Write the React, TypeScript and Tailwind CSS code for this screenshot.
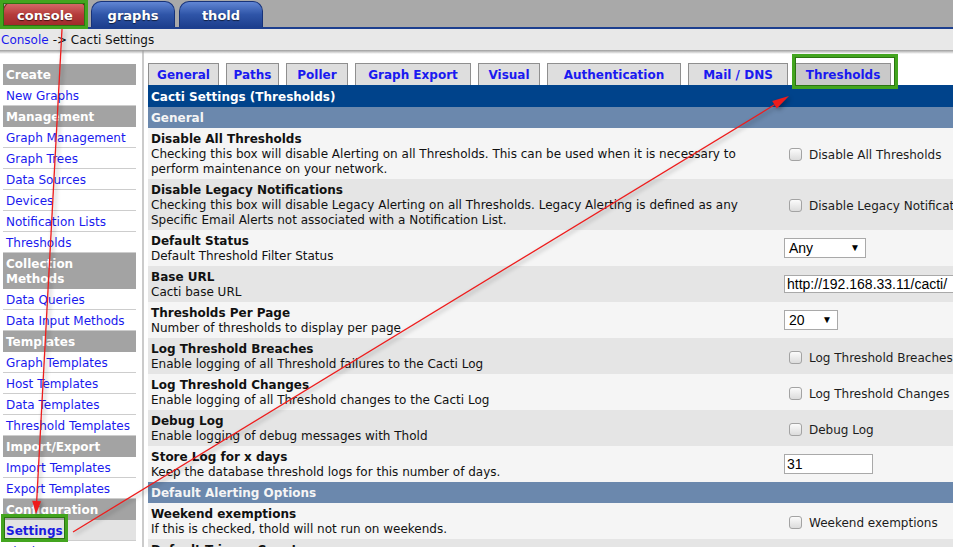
import React from 'react';

type Ctl =
  | { type: 'check'; label: string }
  | { type: 'select'; value: string; width: string }
  | { type: 'input'; value: string; width: string; height: string };

interface Row {
  title: string;
  desc: string;
  ctl: Ctl;
}

interface Section {
  name: string;
  rows: Row[];
}

type MenuEntry = { header: string; tall?: boolean } | { item: string; active?: boolean };

const menu: MenuEntry[] = [
  { header: 'Create' },
  { item: 'New Graphs' },
  { header: 'Management' },
  { item: 'Graph Management' },
  { item: 'Graph Trees' },
  { item: 'Data Sources' },
  { item: 'Devices' },
  { item: 'Notification Lists' },
  { item: 'Thresholds' },
  { header: 'Collection Methods', tall: true },
  { item: 'Data Queries' },
  { item: 'Data Input Methods' },
  { header: 'Templates' },
  { item: 'Graph Templates' },
  { item: 'Host Templates' },
  { item: 'Data Templates' },
  { item: 'Threshold Templates' },
  { header: 'Import/Export' },
  { item: 'Import Templates' },
  { item: 'Export Templates' },
  { header: 'Configuration' },
  { item: 'Settings', active: true },
  { item: 'Plugin Management' },
];

const tabs = [
  { name: 'General', w: 'w-[71px]' },
  { name: 'Paths', w: 'w-[53px]' },
  { name: 'Poller', w: 'w-[62px]' },
  { name: 'Graph Export', w: 'w-[116px]' },
  { name: 'Visual', w: 'w-[62px]' },
  { name: 'Authentication', w: 'w-[134px]' },
  { name: 'Mail / DNS', w: 'w-[100px]' },
  { name: 'Thresholds', w: 'w-[96px]', active: true },
];

const sections: Section[] = [
  {
    name: 'General',
    rows: [
      {
        title: 'Disable All Thresholds',
        desc: 'Checking this box will disable Alerting on all Thresholds. This can be used when it is necessary to perform maintenance on your network.',
        ctl: { type: 'check', label: 'Disable All Thresholds' },
      },
      {
        title: 'Disable Legacy Notifications',
        desc: 'Checking this box will disable Legacy Alerting on all Thresholds. Legacy Alerting is defined as any Specific Email Alerts not associated with a Notification List.',
        ctl: { type: 'check', label: 'Disable Legacy Notifications' },
      },
      {
        title: 'Default Status',
        desc: 'Default Threshold Filter Status',
        ctl: { type: 'select', value: 'Any', width: 'w-[82px]' },
      },
      {
        title: 'Base URL',
        desc: 'Cacti base URL',
        ctl: { type: 'input', value: 'http://192.168.33.11/cacti/', width: 'w-[230px]', height: 'h-[18px]' },
      },
      {
        title: 'Thresholds Per Page',
        desc: 'Number of thresholds to display per page',
        ctl: { type: 'select', value: '20', width: 'w-[54px]' },
      },
      {
        title: 'Log Threshold Breaches',
        desc: 'Enable logging of all Threshold failures to the Cacti Log',
        ctl: { type: 'check', label: 'Log Threshold Breaches' },
      },
      {
        title: 'Log Threshold Changes',
        desc: 'Enable logging of all Threshold changes to the Cacti Log',
        ctl: { type: 'check', label: 'Log Threshold Changes' },
      },
      {
        title: 'Debug Log',
        desc: 'Enable logging of debug messages with Thold',
        ctl: { type: 'check', label: 'Debug Log' },
      },
      {
        title: 'Store Log for x days',
        desc: 'Keep the database threshold logs for this number of days.',
        ctl: { type: 'input', value: '31', width: 'w-[89px]', height: 'h-[20px]' },
      },
    ],
  },
  {
    name: 'Default Alerting Options',
    rows: [
      {
        title: 'Weekend exemptions',
        desc: 'If this is checked, thold will not run on weekends.',
        ctl: { type: 'check', label: 'Weekend exemptions' },
      },
      {
        title: 'Default Trigger Count',
        desc: 'Default number of consecutive times the Data Source must be in breach of the threshold for an alert to be raised.',
        ctl: { type: 'input', value: '1', width: 'w-[40px]', height: 'h-[20px]' },
      },
    ],
  },
];

function TopTab({ label, red }: { label: string; red?: boolean }) {
  return (
    <div
      className={`w-[84px] h-[26px] rounded-t-[10px] border border-b-0 flex items-center justify-center pt-[1px] text-white font-bold text-[13px] [text-shadow:0_1px_1px_rgba(0,0,0,0.6)] ${
        red
          ? 'bg-linear-to-b from-[#d97070] via-[#b53b3b] to-[#9c2828] border-[#7d1e1e]'
          : 'bg-linear-to-b from-[#6186d4] via-[#2f55a8] to-[#1d3f8e] border-[#17337a]'
      }`}
    >
      {label}
    </div>
  );
}

function Control({ ctl }: { ctl: Ctl }) {
  if (ctl.type === 'check') {
    return (
      <div className="flex items-center pl-[5px] whitespace-nowrap">
        <span className="relative top-[1px] w-[13px] h-[13px] rounded-[3px] border border-[#a3a3a3] bg-linear-to-b from-[#fbfbfb] to-[#dcdcdc]" />
        <span className="relative top-[2px] ml-[7px] text-[#1c1c1c]">{ctl.label}</span>
      </div>
    );
  }
  if (ctl.type === 'select') {
    return (
      <div
        className={`${ctl.width} h-[20px] border border-[#a9a9a9] bg-white flex items-center justify-between pl-[4px] pr-[5px] font-['Liberation_Sans',Arial,sans-serif] text-[14px] text-black`}
      >
        <span>{ctl.value}</span>
        <span className="text-[10px] leading-none">▼</span>
      </div>
    );
  }
  return (
    <div
      className={`${ctl.width} ${ctl.height} border border-[#a9a9a9] bg-white flex items-center pl-[2px] font-['Liberation_Sans',Arial,sans-serif] text-[14px] text-black whitespace-nowrap`}
    >
      {ctl.value}
    </div>
  );
}

export default function App() {
  return (
    <div className="relative w-[953px] h-[547px] overflow-hidden bg-white font-['DejaVu_Sans',Verdana,sans-serif] text-[12px] leading-[15px] text-[#111]">
      {/* top tabs */}
      <div className="h-[29px] bg-[#a9a9a9] border-b-2 border-[#1d3f8f] flex items-end gap-[4px] pl-[3px]">
        <TopTab label="console" red />
        <TopTab label="graphs" />
        <TopTab label="thold" />
      </div>

      {/* breadcrumb */}
      <div className="h-[21px] bg-[#e8e8e8] flex items-center pl-[1px] pt-[2px]">
        <span className="text-[#1a1aee]">Console</span>
        <span className="ml-[4px]">-&gt; Cacti Settings</span>
      </div>

      <div className="relative flex">
        <div className="absolute left-0 right-0 top-0 h-[4px] bg-linear-to-b from-[#9c9c9c] to-transparent" />

        {/* sidebar */}
        <div className="w-[144px] shrink-0 pt-[14px] pl-[3px] pr-[6px] border-r-2 border-[#cbcbcb] h-[600px]">
          {menu.map((m, i) =>
            'header' in m ? (
              <div
                key={i}
                className={`bg-[#a3a3a3] text-white font-bold px-[3px] pt-[4px] pb-[2px] ${m.tall ? 'pr-[40px]' : ''}`}
              >
                {m.header}
              </div>
            ) : (
              <div
                key={i}
                className={`h-[21px] pt-[4px] px-[3px] border-b border-[#cdcdcd] whitespace-nowrap ${
                  m.active ? 'bg-[#e3e3e3] font-bold text-[#1a1ae0]' : 'text-[#1a1aee]'
                }`}
              >
                {m.item}
              </div>
            )
          )}
        </div>

        {/* main */}
        <div className="shrink-0 w-[950px] pl-[4px] pt-[13px]">
          <div className="flex gap-[7px] h-[22px]">
            {tabs.map((t) => (
              <div
                key={t.name}
                className={`${t.w} h-[22px] border border-b-0 border-[#8f8f8f] flex items-center justify-center pt-[2px] font-bold text-[#1a1af0] ${
                  t.active ? 'bg-[#c9c9c9]' : 'bg-[#dedede]'
                }`}
              >
                {t.name}
              </div>
            ))}
          </div>

          <div className="bg-[#00438b] text-white font-bold h-[22px] pt-[5px] px-[3px]">
            Cacti Settings (Thresholds)
          </div>

          {sections.map((s) => (
            <div key={s.name}>
              <div className="bg-[#6b88ad] text-[#f5f5f5] font-bold h-[21px] pt-[4px] px-[3px]">{s.name}</div>
              {s.rows.map((r, i) => (
                <div key={r.title} className={`flex ${i % 2 === 0 ? 'bg-[#f5f5f5]' : 'bg-[#e5e5e5]'}`}>
                  <div className="w-[636px] shrink-0 px-[3px] pt-[4px] pb-[2px]">
                    <div className="font-bold">{r.title}</div>
                    <div>{r.desc}</div>
                  </div>
                  <div className="flex items-center">
                    <Control ctl={r.ctl} />
                  </div>
                </div>
              ))}
            </div>
          ))}
        </div>
      </div>

      {/* annotations */}
      <div className="absolute left-0 top-0 w-[88px] h-[29px] border-[3px] border-[#43a51f] shadow-[inset_0_0_0_1px_#2b7412]" />
      <div className="absolute left-[1px] top-[514px] w-[67px] h-[28px] border-[3px] border-[#43a51f] shadow-[inset_0_0_0_1px_#2b7412]" />
      <div className="absolute left-[792px] top-[54px] w-[106px] h-[35px] border-[3px] border-[#43a51f] shadow-[inset_0_0_0_1px_#2b7412]" />

      <svg
        className="absolute left-0 top-0 pointer-events-none drop-shadow-[2px_2px_2px_rgba(0,0,0,0.35)]"
        width="953"
        height="547"
        viewBox="0 0 953 547"
      >
        <line x1="62" y1="29" x2="36.7" y2="501" stroke="#ee1c1c" strokeWidth="1.3" />
        <polygon points="36,514 41.2,501.2 32.2,500.8" fill="#ee1c1c" />
        <line x1="73" y1="532" x2="774.5" y2="104.8" stroke="#ee1c1c" strokeWidth="1.3" />
        <polygon points="789,96 776.8,108.6 772.2,101" fill="#ee1c1c" />
      </svg>
    </div>
  );
}
